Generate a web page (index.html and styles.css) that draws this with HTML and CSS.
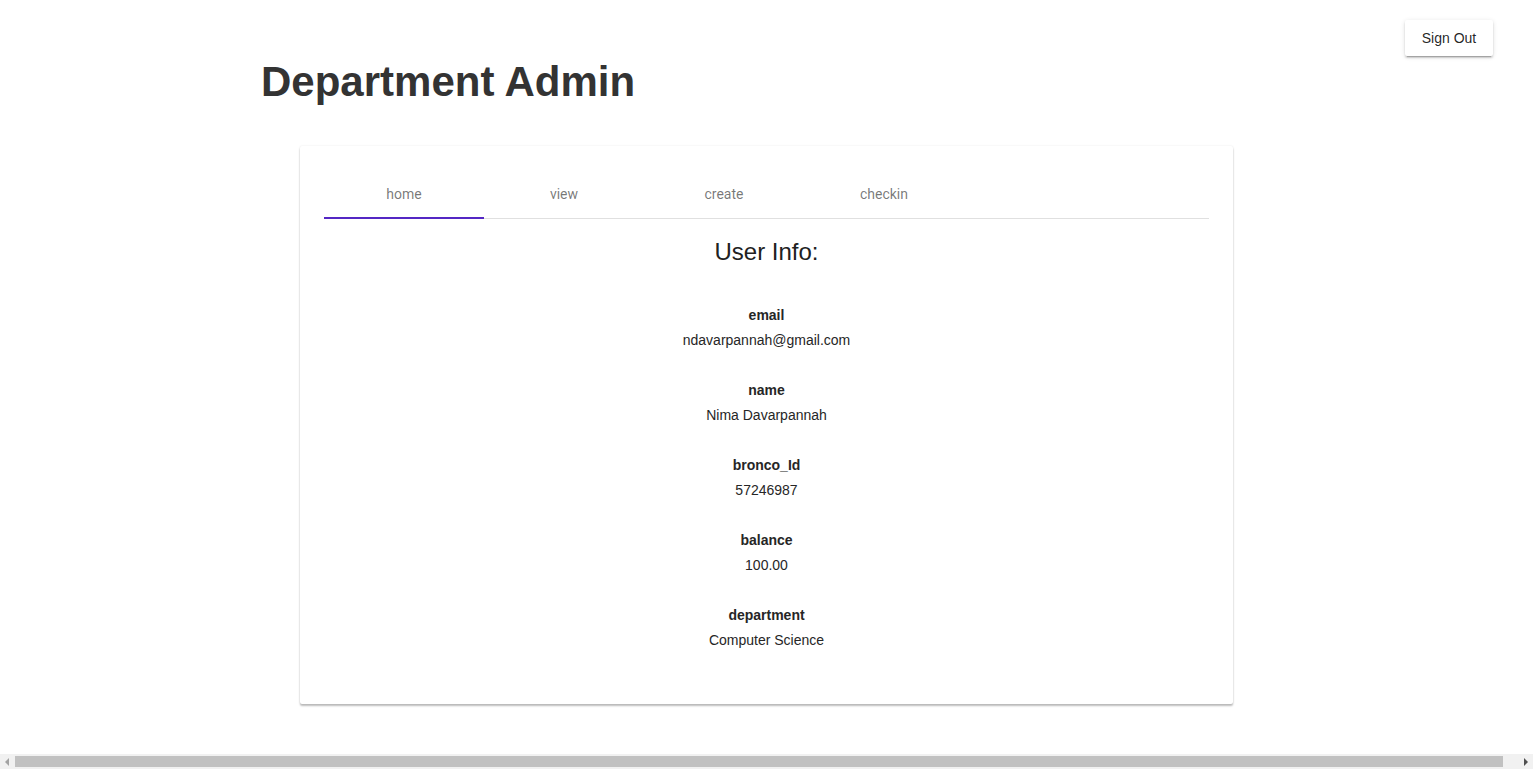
FILE: index.html
```html
<!DOCTYPE html>
<html lang="en">
<head>
<meta charset="utf-8">
<title>Department Admin</title>
<link rel="stylesheet" href="styles.css">
</head>
<body>
  <button class="signout">Sign Out</button>
  <h1 class="title">Department Admin</h1>
  <main class="card">
    <nav class="tabs">
      <div class="tab active">home</div>
      <div class="tab">view</div>
      <div class="tab">create</div>
      <div class="tab">checkin</div>
    </nav>
    <h2 class="heading">User Info:</h2>
    <div class="info">
      <div class="field"><div class="label">email</div><div class="value">ndavarpannah@gmail.com</div></div>
      <div class="field"><div class="label">name</div><div class="value">Nima Davarpannah</div></div>
      <div class="field"><div class="label">bronco_Id</div><div class="value">57246987</div></div>
      <div class="field"><div class="label">balance</div><div class="value">100.00</div></div>
      <div class="field"><div class="label">department</div><div class="value">Computer Science</div></div>
    </div>
  </main>
  <div class="hscroll">
    <div class="arrow left"></div>
    <div class="track"><div class="thumb"></div></div>
    <div class="arrow right"></div>
  </div>
</body>
</html>
```
FILE: styles.css
```css
html, body {
  margin: 0;
  padding: 0;
  background: #fff;
}
body {
  font-family: "Liberation Sans", Arial, sans-serif;
  color: #212121;
  position: relative;
  padding-bottom: 40px;
}
.signout {
  position: absolute;
  top: 20px;
  right: 40px;
  width: 88px;
  height: 36px;
  border: none;
  border-radius: 2px;
  background: #fff;
  font-family: "Liberation Sans", Arial, sans-serif;
  font-size: 14px;
  color: rgba(0,0,0,0.87);
  box-shadow: 0 2px 2px 0 rgba(0,0,0,0.14), 0 3px 1px -2px rgba(0,0,0,0.2), 0 1px 5px 0 rgba(0,0,0,0.12);
  padding: 0;
  cursor: pointer;
}
.title {
  margin: 0;
  padding: 58px 0 0 261px;
  font-size: 42px;
  line-height: 48px;
  font-weight: bold;
  color: #333;
}
.card {
  width: 933px;
  margin: 40px auto 0;
  box-sizing: border-box;
  padding: 24px 24px 54px;
  background: #fff;
  border-radius: 2px;
  box-shadow: 0 2px 2px 0 rgba(0,0,0,0.26), 0 0 2px 0 rgba(0,0,0,0.1);
}
.tabs {
  display: flex;
  height: 48px;
  border-bottom: 1px solid #e0e0e0;
}
.tab {
  width: 160px;
  display: flex;
  align-items: center;
  justify-content: center;
  font-family: Roboto, sans-serif;
  font-size: 14px;
  color: rgba(0,0,0,0.54);
  position: relative;
}
.tab.active::after {
  content: "";
  position: absolute;
  left: 0;
  right: 0;
  bottom: -1px;
  height: 2px;
  background: #5427c4;
}
.heading {
  margin: 19px 0 0;
  text-align: center;
  font-size: 24px;
  line-height: 28px;
  font-weight: normal;
  color: #212121;
}
.info {
  margin-top: 39px;
  display: flex;
  flex-direction: column;
  gap: 30px;
  align-items: center;
  font-size: 14px;
  line-height: 20px;
}
.field {
  text-align: center;
}
.label {
  font-weight: bold;
  color: #262626;
}
.value {
  margin-top: 5px;
  color: #262626;
}
.hscroll {
  position: fixed;
  left: 0;
  right: 0;
  bottom: 0;
  height: 15px;
  background: #f1f1f1;
  display: flex;
}
.arrow {
  width: 15px;
  height: 15px;
  position: relative;
  flex: none;
}
.arrow::before {
  content: "";
  position: absolute;
  top: 4px;
  width: 0;
  height: 0;
  border-top: 4px solid transparent;
  border-bottom: 4px solid transparent;
}
.arrow.left::before {
  left: 5px;
  border-right: 4px solid #a3a3a3;
}
.arrow.right::before {
  left: 6px;
  border-left: 4px solid #505050;
}
.track {
  flex: 1;
  padding: 2px 0;
  display: flex;
}
.thumb {
  width: 1488px;
  background: #c1c1c1;
}
```
